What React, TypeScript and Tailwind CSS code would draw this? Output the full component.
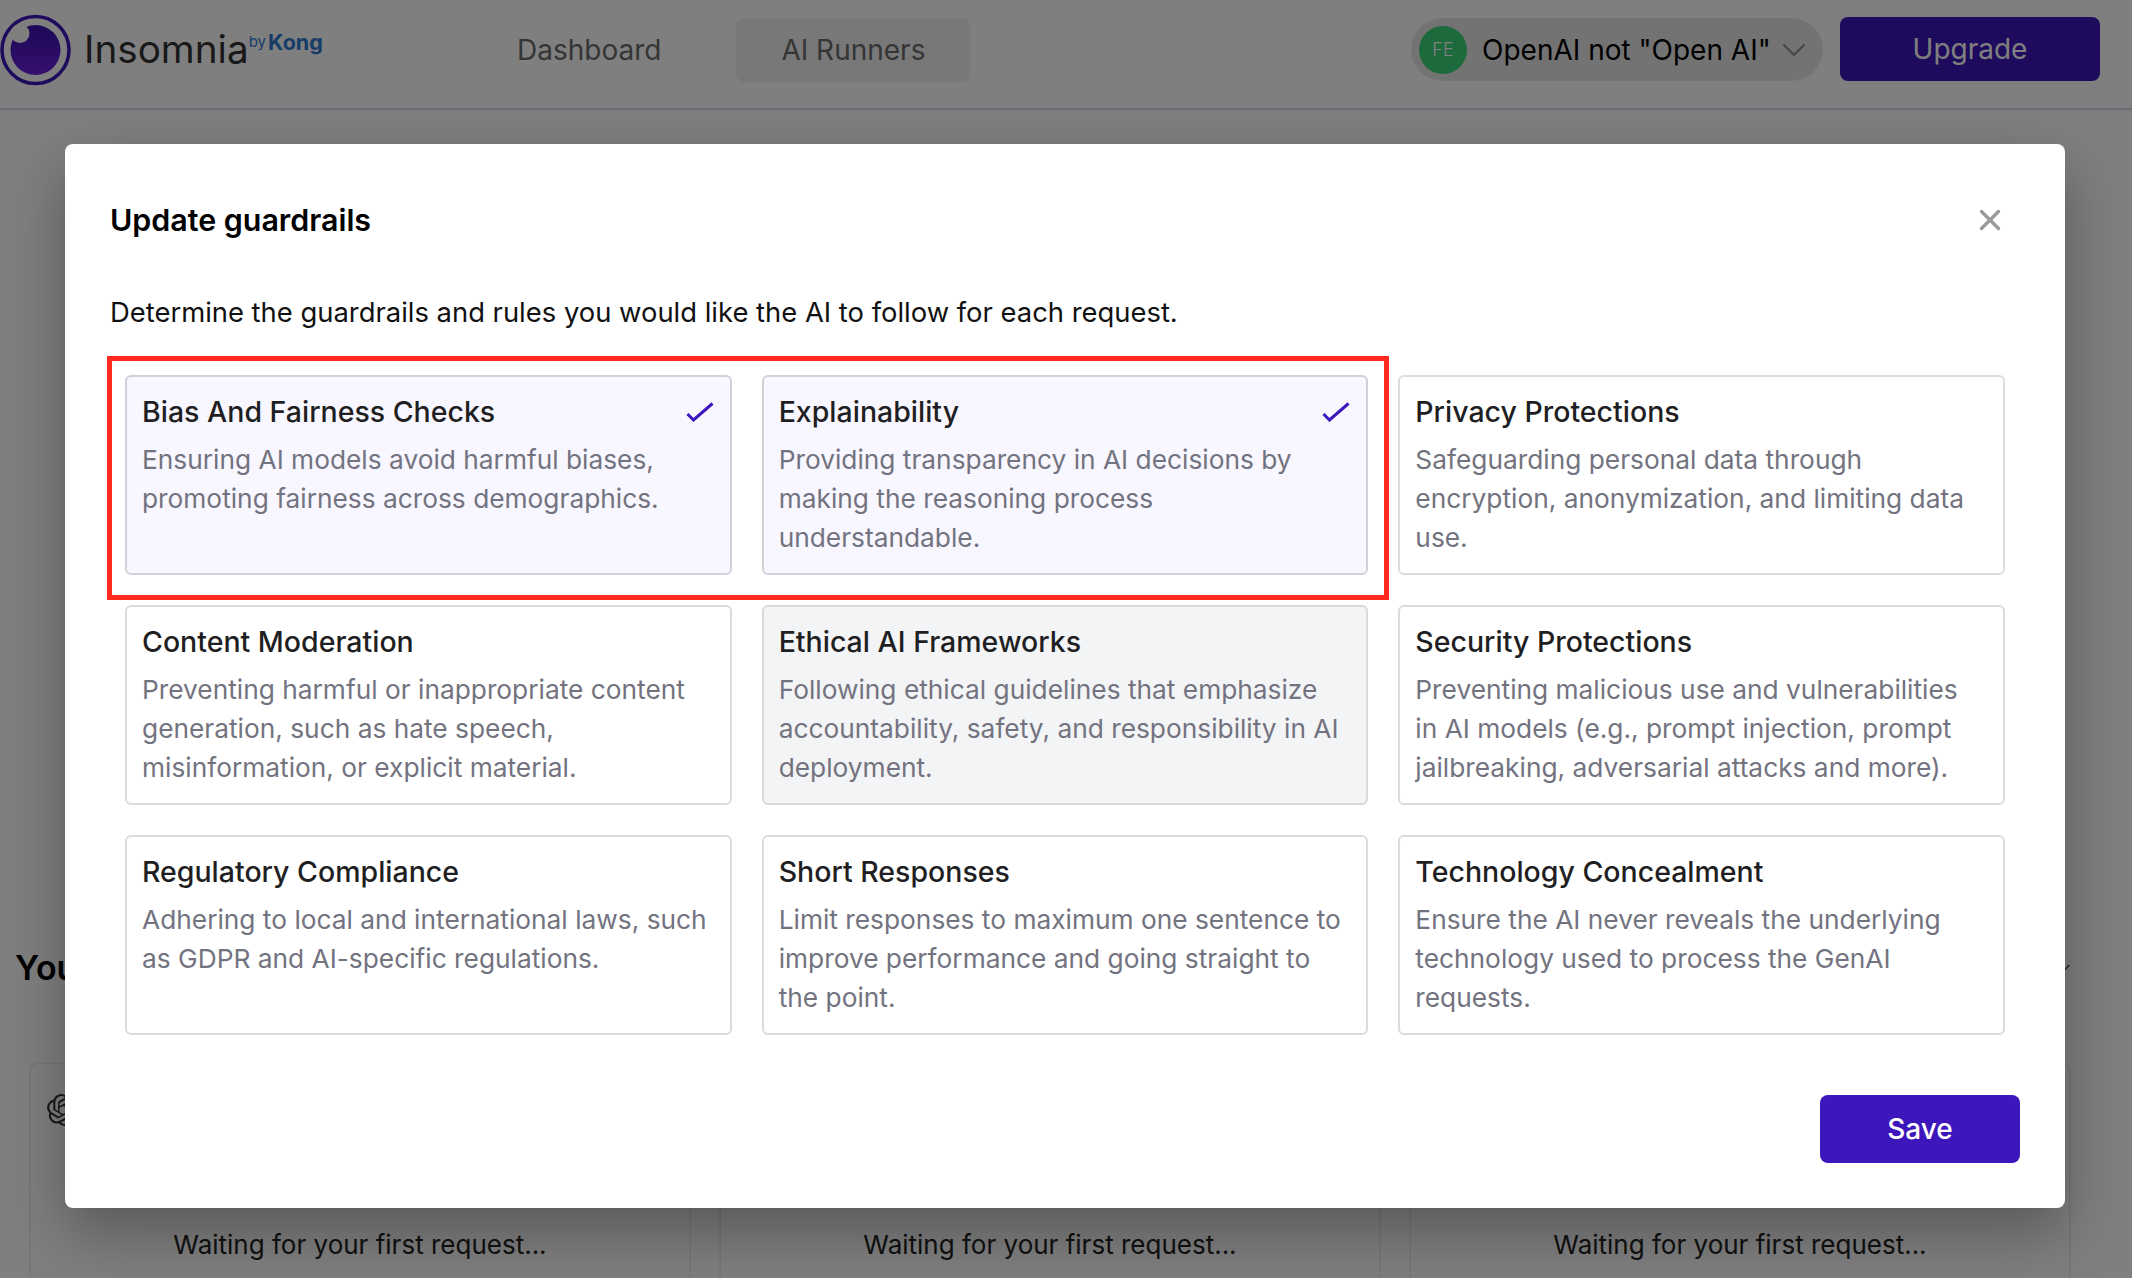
import { ChevronDown, X } from "lucide-react";
import { SiOpenai } from "react-icons/si";

const guardrails = [
  { title: "Bias And Fairness Checks", text: "Ensuring AI models avoid harmful biases, promoting fairness across demographics.", state: "selected" },
  { title: "Explainability", text: "Providing transparency in AI decisions by making the reasoning process understandable.", state: "selected" },
  { title: "Privacy Protections", text: "Safeguarding personal data through encryption, anonymization, and limiting data use.", state: "idle" },
  { title: "Content Moderation", text: "Preventing harmful or inappropriate content generation, such as hate speech, misinformation, or explicit material.", state: "idle" },
  { title: "Ethical AI Frameworks", text: "Following ethical guidelines that emphasize accountability, safety, and responsibility in AI deployment.", state: "hover" },
  { title: "Security Protections", text: "Preventing malicious use and vulnerabilities in AI models (e.g., prompt injection, prompt jailbreaking, adversarial attacks and more).", state: "idle" },
  { title: "Regulatory Compliance", text: "Adhering to local and international laws, such as GDPR and AI-specific regulations.", state: "idle" },
  { title: "Short Responses", text: "Limit responses to maximum one sentence to improve performance and going straight to the point.", state: "idle" },
  { title: "Technology Concealment", text: "Ensure the AI never reveals the underlying technology used to process the GenAI requests.", state: "idle" }
];

function Logo() {
  return (
    <svg width="72" height="72" viewBox="0 0 72 72" aria-hidden="true">
      <defs>
        <linearGradient id="eye" x1="0" y1="0" x2="0" y2="1">
          <stop offset="0" stopColor="#3a10b0" />
          <stop offset="1" stopColor="#6a1fe0" />
        </linearGradient>
      </defs>
      <circle cx="35.5" cy="36" r="33.5" fill="none" stroke="#3d17bc" strokeWidth="3.5" />
      <circle cx="35.5" cy="36" r="25" fill="url(#eye)" />
      <circle cx="20" cy="19.5" r="9.5" fill="#ffffff" />
    </svg>
  );
}

function Header() {
  return (
    <header className="flex h-[110px] items-center border-b-2 border-[#dfd9f0] pb-[9px]">
      <div className="flex w-[517px] items-center">
        <Logo />
        <span className="ml-[12px] text-[38.7px] font-normal leading-none text-[#333333]">Insomnia</span>
        <span className="mb-[16px] text-[15px] leading-none text-[#2f78d0]">by</span>
        <span className="mb-[14px] ml-[2px] text-[21.5px] font-bold leading-none text-[#2f78d0]">Kong</span>
      </div>
      <span className="text-[28px] text-[#6b6b6b]">Dashboard</span>
      <div className="ml-[75px] flex h-[64px] w-[234px] items-center justify-center rounded-lg bg-[#f0f0f0] text-[28px] text-[#6b6b6b]">AI Runners</div>
      <div className="ml-auto flex h-[63px] w-[412px] items-center rounded-full bg-[#e6e6e6] pl-[8px]">
        <span className="flex h-[48px] w-[48px] items-center justify-center rounded-full bg-[#3ad678] text-[18px] font-light text-[#ffffff]">FE</span>
        <span className="ml-[15px] text-[28px] text-black">OpenAI not "Open AI"</span>
        <ChevronDown className="ml-[3px] text-[#8a8a8a]" size={40} strokeWidth={1.2} aria-hidden="true" />
      </div>
      <button className="mb-[2px] ml-[17px] mr-[32px] h-[64px] w-[260px] rounded-lg bg-[#3d17bc] text-[28px] text-white">Upgrade</button>
    </header>
  );
}

function Background() {
  return (
    <div className="h-[1278px] overflow-hidden bg-white font-['Inter',sans-serif]">
      <Header />
      <div className="mt-[834px] flex items-center justify-between pl-[15px] pr-[58px]">
        <h2 className="text-[34px] font-semibold leading-[48px] text-black">Your</h2>
        <ChevronDown className="text-[#555555]" size={20} aria-hidden="true" />
      </div>
      <div className="mt-[71px] grid grid-cols-3 gap-[30px] pl-[30px] pr-[62px]">
        {[0, 1, 2].map((i) => (
          <div key={i} className="h-[300px] rounded-lg border border-[#ececec] bg-white px-4 pt-[30px] text-center text-[26px] text-[#222222] shadow-sm">
            <SiOpenai className="text-[#333333]" size={32} aria-hidden="true" />
            <p className="mt-[99px]">Waiting for your first request...</p>
          </div>
        ))}
      </div>
    </div>
  );
}

function GuardrailCard({ title, text, state }: { title: string; text: string; state: string }) {
  const bg = state === "selected" ? "bg-[#f8f7ff] border-[#d2d1d9]" : state === "hover" ? "bg-[#f3f4f6] border-[#d9d9dc]" : "bg-white border-[#dcdcdc]";
  return (
    <div className={`h-[200px] rounded-md border-2 pl-[15px] pr-[20px] pt-[17px] ${bg}`}>
      <div className="-mr-[5px] flex h-[36px] items-center justify-between">
        <h3 className="text-[28.5px] font-medium leading-[36px] text-[#1f1f23]">{title}</h3>
        {state === "selected" && (
          <svg width="28" height="20" viewBox="0 0 28 20" className="mr-[1px]" aria-hidden="true">
            <path d="M1.5 12 L7.5 18 L26.5 1.5" fill="none" stroke="#3d17bc" strokeWidth="3" />
          </svg>
        )}
      </div>
      <p className="mt-[10px] text-[26.3px] leading-[39px] text-[#737380]">{text}</p>
    </div>
  );
}

function Modal() {
  return (
    <div className="absolute left-[65px] top-[144px] h-[1064px] w-[2000px] rounded-lg bg-white px-[45px] pt-[56px] font-['Inter',sans-serif] shadow-[0_25px_60px_rgba(0,0,0,0.3)]">
      <div className="flex h-[40px] items-center justify-between pr-[13px]">
        <h1 className="text-[30.4px] font-semibold leading-[40px] text-black">Update guardrails</h1>
        <X className="text-[#9a9a9a]" size={34} strokeWidth={2.4} aria-hidden="true" />
      </div>
      <p className="mt-[52px] text-[27.4px] leading-[40px] text-[#111111]">Determine the guardrails and rules you would like the AI to follow for each request.</p>
      <div className="relative mx-[15px] mt-[43px] grid grid-cols-3 gap-x-[30px] gap-y-[30px]">
        {guardrails.map((g) => (
          <GuardrailCard key={g.title} {...g} />
        ))}
        <div className="absolute left-[-18px] top-[-19px] h-[244px] w-[1282px] border-[5px] border-[#ff2a1f]" />
      </div>
      <div className="mt-[60px] flex justify-end">
        <button className="h-[68px] w-[200px] rounded-lg bg-[#3d17bc] text-[28px] font-medium text-white">Save</button>
      </div>
    </div>
  );
}

export default function App() {
  return (
    <div className="relative h-[1278px] w-[2132px] overflow-hidden">
      <Background />
      <div className="absolute inset-0 bg-black/50" />
      <Modal />
    </div>
  );
}
